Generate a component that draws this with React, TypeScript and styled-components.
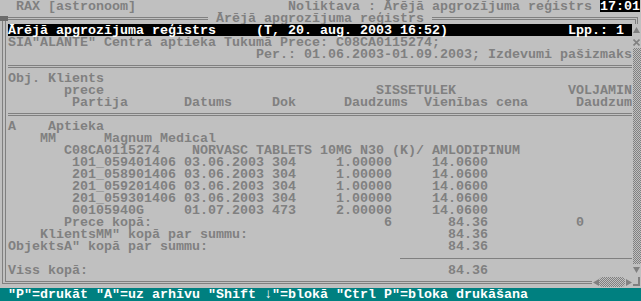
import styled, { createGlobalStyle } from 'styled-components'

const INK = '#808080'
const PAPER = '#c0c0c0'
const CH = 8

const checker = `repeating-conic-gradient(${INK} 0 25%, ${PAPER} 0 50%) 0 0 / 2px 2px`

const GlobalStyle = createGlobalStyle`
  html, body {
    margin: 0;
    padding: 0;
    background: ${PAPER};
  }
`

const Screen = styled.div`
  width: 641px;
  height: 301px;
  display: grid;
  grid-template-rows: 12px 276px 13px;
  overflow: hidden;
  background: ${PAPER};
  color: ${INK};
  font-family: "Liberation Mono", "DejaVu Sans Mono", monospace;
  font-size: 13.33px;
  font-weight: bold;
`

const Line = styled.div<{ $indent?: number }>`
  display: flex;
  box-sizing: border-box;
  height: 12px;
  padding-top: 1px;
  line-height: 11px;
  white-space: pre;
  padding-left: ${p => (p.$indent ?? 0) * CH}px;
`

const Cell = styled.span<{ $w?: number; $right?: boolean }>`
  flex: none;
  width: ${p => (p.$w ? `${p.$w * CH}px` : 'auto')};
  text-align: ${p => (p.$right ? 'right' : 'left')};
`

const Clock = styled.span`
  flex: none;
  width: 40px;
  margin-top: -1px;
  padding-top: 1px;
  background: #000;
  color: #fff;
`

const Window = styled.div`
  display: grid;
  grid-template-columns: 8px 624px 9px;
  grid-template-rows: 12px 252px 12px;
`

const CornerTL = styled.div`
  display: flex;
  flex-direction: column;
`

const Knob = styled.div`
  margin-top: 4px;
  height: 5px;
  background: #6c6c6c;
`

const Rails = styled.div`
  flex: 1;
  margin-left: 2px;
  width: 2px;
  border-left: 1px solid ${INK};
  border-right: 1px solid ${INK};
`

const Edge = styled.div`
  display: flex;
  align-items: flex-start;
`

const RuleLine = styled.div`
  display: flex;
  height: 12px;
`

const DoubleRule = styled.div`
  flex: 1;
  margin-top: 5px;
  border-top: 3px double ${INK};
`

const SingleRule = styled.div`
  flex: 1;
  margin-top: 6px;
  border-top: 1px solid ${INK};
`

const Title = styled.span`
  box-sizing: border-box;
  height: 12px;
  padding-top: 1px;
  line-height: 11px;
  white-space: pre;
`

const CornerTR = styled.div`
  margin-top: 5px;
  width: 3px;
  height: 4px;
  border-top: 3px double ${INK};
  border-right: 3px double ${INK};
`

const CornerBL = styled.div`
  margin-left: 2px;
  height: 7px;
  border-left: 1px solid ${INK};
  border-bottom: 1px solid ${INK};
`

const CornerBLInner = styled.div`
  margin-left: 2px;
  height: 5px;
  border-left: 1px solid ${INK};
  border-bottom: 1px solid ${INK};
`

const Content = styled.div`
  display: flex;
  flex-direction: column;
`

const ReportBar = styled(Line)`
  background: #000;
  color: #fff;
`

const ScrollBar = styled.div`
  display: flex;
  flex-direction: column;
  padding-left: 1px;
`

const ScrollButton = styled.div`
  height: 12px;
  display: flex;
  align-items: center;
`

const Track = styled.div`
  flex: 1;
  width: 8px;
  background: ${checker};
`

const HThumb = styled.div`
  width: 26px;
  height: 10px;
  margin-top: 1px;
  border-radius: 4px;
  background: ${checker};
`

const HButton = styled.div`
  width: 7px;
  height: 12px;
  display: flex;
  align-items: center;
  justify-content: center;
`

const Grip = styled.div`
  margin: 1px 0 0 1px;
  width: 5px;
  height: 7px;
  border-right: 2px solid ${INK};
  border-bottom: 2px solid ${INK};
`

const KeyBar = styled.div`
  box-sizing: border-box;
  background: #008080;
  color: #fff;
  padding: 1px 0 0 8px;
  line-height: 12px;
  white-space: pre;
`

type Dir = 'up' | 'down' | 'left' | 'right'

const Arrow = ({ dir }: { dir: Dir }) => {
  const vertical = dir === 'up' || dir === 'down'
  const points = {
    up: '0,6 3.5,0 7,6',
    down: '0,0 7,0 3.5,6',
    left: '0,3.5 6,0 6,7',
    right: '0,0 6,3.5 0,7',
  }[dir]
  return (
    <svg width={vertical ? 7 : 6} height={vertical ? 6 : 7} viewBox={vertical ? '0 0 7 6' : '0 0 6 7'}>
      <polygon points={points} fill={INK} />
    </svg>
  )
}

const Cross = () => (
  <svg width="7" height="7" viewBox="0 0 7 7">
    <path d="M0.5 0.5 L6.5 6.5 M6.5 0.5 L0.5 6.5" stroke={INK} strokeWidth="1.6" />
  </svg>
)

const batches = [
  ['101_059401406', '03.06.2003', '304', '1.00000', '14.0600'],
  ['201_058901406', '03.06.2003', '304', '1.00000', '14.0600'],
  ['201_059201406', '03.06.2003', '304', '1.00000', '14.0600'],
  ['201_059301406', '03.06.2003', '304', '1.00000', '14.0600'],
  ['00105940G', '01.07.2003', '473', '2.00000', '14.0600'],
]

const TotalLine = ({ indent, label, qty = '', sum, rest = '' }: {
  indent: number
  label: string
  qty?: string
  sum: string
  rest?: string
}) => (
  <Line $indent={indent}>
    <Cell $w={36 - indent}>{label}</Cell>
    <Cell $w={12} $right>{qty}</Cell>
    <Cell $w={12} $right>{sum}</Cell>
    <Cell $w={12} $right>{rest}</Cell>
  </Line>
)

export default function App() {
  return (
    <Screen>
      <GlobalStyle />
      <Line $indent={2}>
        <Cell $w={34}>RAX [astronoom]</Cell>
        <Cell $w={39}>Noliktava : Ārējā apgrozījuma reģistrs</Cell>
        <Clock>17:01</Clock>
      </Line>

      <Window>
        <CornerTL>
          <Knob />
          <Rails />
        </CornerTL>
        <Edge>
          <DoubleRule />
          <Title> Ārējā apgrozījuma reģistrs </Title>
          <DoubleRule />
        </Edge>
        <Edge>
          <CornerTR />
        </Edge>

        <CornerTL>
          <Rails />
        </CornerTL>
        <Content>
          <ReportBar>
            <Cell $w={31}>Ārējā apgrozījuma reģistrs</Cell>
            <Cell $w={39}>(T, 20. aug. 2003 16:52)</Cell>
            <Cell>Lpp.: 1</Cell>
          </ReportBar>
          <Line>
            <Cell>SIA"ALANTE" Centra aptieka Tukumā Prece: C08CA0115274;</Cell>
          </Line>
          <Line $indent={31}>
            <Cell>Per.: 01.06.2003-01.09.2003; Izdevumi pašizmaks</Cell>
          </Line>
          <RuleLine>
            <DoubleRule />
          </RuleLine>
          <Line>
            <Cell>Obj. Klients</Cell>
          </Line>
          <Line $indent={7}>
            <Cell $w={39}>prece</Cell>
            <Cell $w={24}>SISSETULEK</Cell>
            <Cell>VOLJAMIN</Cell>
          </Line>
          <Line $indent={8}>
            <Cell $w={14}>Partija</Cell>
            <Cell $w={11}>Datums</Cell>
            <Cell $w={9}>Dok</Cell>
            <Cell $w={10}>Daudzums</Cell>
            <Cell $w={19}>Vienības cena</Cell>
            <Cell>Daudzum</Cell>
          </Line>
          <RuleLine>
            <DoubleRule />
          </RuleLine>
          <Line>
            <Cell $w={5}>A</Cell>
            <Cell>Aptieka</Cell>
          </Line>
          <Line $indent={4}>
            <Cell $w={8}>MM</Cell>
            <Cell>Magnum Medical</Cell>
          </Line>
          <Line $indent={7}>
            <Cell $w={16}>C08CA0115274</Cell>
            <Cell>NORVASC TABLETS 10MG N30 (K)/ AMLODIPINUM</Cell>
          </Line>
          {batches.map(([lot, date, doc, qty, price]) => (
            <Line key={lot} $indent={8}>
              <Cell $w={14}>{lot}</Cell>
              <Cell $w={11}>{date}</Cell>
              <Cell $w={3}>{doc}</Cell>
              <Cell $w={12} $right>{qty}</Cell>
              <Cell $w={12} $right>{price}</Cell>
            </Line>
          ))}
          <TotalLine indent={7} label="Prece kopā:" qty="6" sum="84.36" rest="0" />
          <TotalLine indent={4} label={'KlientsMM" kopā par summu:'} sum="84.36" />
          <TotalLine indent={0} label={'ObjektsA" kopā par summu:'} sum="84.36" />
          <RuleLine>
            <Cell $w={49} />
            <SingleRule />
          </RuleLine>
          <TotalLine indent={0} label="Viss kopā:" sum="84.36" />
        </Content>
        <ScrollBar>
          <ScrollButton>
            <Arrow dir="up" />
          </ScrollButton>
          <ScrollButton>
            <Cross />
          </ScrollButton>
          <Track />
          <ScrollButton>
            <Arrow dir="down" />
          </ScrollButton>
        </ScrollBar>

        <CornerBL>
          <CornerBLInner />
        </CornerBL>
        <Edge>
          <DoubleRule />
          <HButton>
            <Arrow dir="left" />
          </HButton>
          <HThumb />
          <HButton>
            <Arrow dir="right" />
          </HButton>
        </Edge>
        <Grip />
      </Window>

      <KeyBar>"P"=drukāt "A"=uz arhīvu "Shift ↓"=blokā "Ctrl P"=bloka drukāšana</KeyBar>
    </Screen>
  )
}
